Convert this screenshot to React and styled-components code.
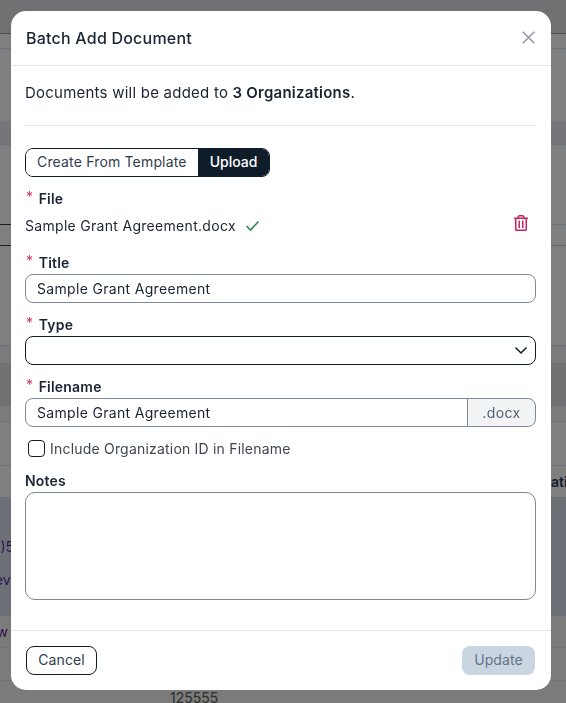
import React from 'react';
import styled, { createGlobalStyle } from 'styled-components';
import { FaRegTrashAlt } from 'react-icons/fa';

const Global = createGlobalStyle`
  html, body { margin: 0; height: 100%; overflow: hidden; background: #7f7f7f; }
  * { box-sizing: border-box; }
  body { font-family: Inter, "Liberation Sans", sans-serif; color: #1a2433; }
`;

/* the table that sits dimmed behind the dialog */
const Backdrop = styled.div`
  display: flex;
  flex-direction: column;
  height: 703px;
  overflow: hidden;
`;

const Row = styled.div`
  position: relative;
  display: flex;
  justify-content: ${p => p.$end ? 'flex-end' : 'flex-start'};
  align-items: center;
  flex: none;
  height: ${p => p.$h}px;
  background: ${p => p.$bg || '#7f7f7f'};
  border-bottom: 1px solid ${p => p.$line || 'transparent'};
  &::before {
    content: '';
    display: ${p => (p.$leftLine ? 'block' : 'none')};
    position: absolute;
    left: 0;
    bottom: -1px;
    width: 11px;
    height: 1px;
    background: ${p => p.$leftLine};
  }
`;

const Peek = styled.span`
  display: flex;
  justify-content: ${p => p.$right ? 'flex-start' : 'flex-end'};
  flex: none;
  width: ${p => p.$w || 14}px;
  overflow: hidden;
  white-space: nowrap;
  font-size: 14px;
  font-weight: ${p => p.$bold ? 600 : 400};
  color: ${p => p.$color || '#2c1250'};
`;

const BottomNumber = styled.span`
  margin-left: 170px;
  margin-top: 12px;
  font-size: 14px;
  line-height: 17px;
  color: #2d2d2d;
`;

const Modal = styled.div`
  position: fixed;
  left: 11px;
  top: 11px;
  width: 540px;
  height: 679px;
  display: flex;
  flex-direction: column;
  background: #fff;
  border-radius: 15px;
  overflow: hidden;
`;

const Header = styled.header`
  display: flex;
  align-items: center;
  justify-content: space-between;
  height: 55px;
  flex: none;
  padding: 0 16px 1px 15px;
  border-bottom: 1px solid #e2e4e8;
`;

const Title = styled.h2`
  margin: 0;
  font-size: 16px;
  line-height: 24px;
  font-weight: 500;
  letter-spacing: 0.22px;
  color: #1a2433;
`;

const CloseBtn = styled.button`
  display: flex;
  padding: 0;
  border: 0;
  background: none;
  color: #8b95a1;
`;

const Body = styled.div`
  flex: 1;
  padding: 0 15px 0 14px;
  display: flex;
  flex-direction: column;
`;

const Lead = styled.p`
  margin: 0;
  padding-top: 16px;
  height: 60px;
  flex: none;
  font-size: 15px;
  line-height: 22px;
  letter-spacing: 0.23px;
  color: #1a2433;
  border-bottom: 1px solid #e2e4e8;
  strong { font-weight: 600; }
`;

const Segment = styled.div`
  display: inline-flex;
  align-self: flex-start;
  flex: none;
  height: 29px;
  margin-top: 22px;
  border: 1px solid #0f1c2a;
  border-radius: 8px;
  overflow: hidden;
`;

const SegmentBtn = styled.button`
  padding: 0 ${p => p.$active ? 12 : 11}px 2px;
  border: 0;
  font: 400 14px Inter, sans-serif;
  letter-spacing: ${p => p.$active ? 0 : 0.17}px;
  background: ${p => p.$active ? '#0f1c2a' : '#fff'};
  color: ${p => p.$active ? '#fff' : '#323d4b'};
  font-weight: ${p => p.$active ? 500 : 400};
`;

const Label = styled.label`
  display: flex;
  align-items: center;
  flex: none;
  height: 20px;
  margin-top: ${p => p.$top || 0}px;
  margin-bottom: ${p => p.$bottom ?? 2}px;
  font-size: 14px;
  font-weight: 600;
  letter-spacing: 0.2px;
  color: #1a2433;
`;

const Star = styled.span`
  width: 12.7px;
  margin-left: 1px;
  font-size: 14px;
  font-weight: 400;
  color: #d6336c;
  position: relative;
  top: -2px;
`;

const FileRow = styled.div`
  display: flex;
  align-items: center;
  flex: none;
  height: 32px;
  padding-right: 7px;
  font-size: 14px;
  letter-spacing: 0.3px;
  color: #1a2433;
`;

const FileCheck = styled.svg`
  width: 15px;
  height: 15px;
  margin-left: 9px;
  color: #2f855a;
`;

const TrashBtn = styled.button`
  display: flex;
  margin-left: auto;
  margin-bottom: 4px;
  padding: 0;
  border: 0;
  background: none;
  color: #c9215d;
  font-size: 16px;
`;

const TextInput = styled.input`
  display: block;
  flex: none;
  width: 100%;
  height: 29px;
  padding: 0 11px;
  border: 1px solid #7c8b9b;
  border-radius: 8px;
  font: 400 14px Inter, sans-serif;
  letter-spacing: 0.32px;
  color: #1a2433;
  background: #fff;
  outline: 0;
`;

const SelectWrap = styled.div`
  position: relative;
  flex: none;
  height: 29px;
`;

const Select = styled.select`
  appearance: none;
  display: block;
  width: 100%;
  height: 29px;
  border: 1px solid #0f1c2a;
  border-radius: 8px;
  background: #fff;
  outline: 0;
`;

const Chevron = styled.svg`
  position: absolute;
  right: 8px;
  top: 9px;
  width: 14px;
  height: 11px;
  color: #0f1c2a;
`;

const Group = styled.div`
  display: flex;
  flex: none;
  height: 29px;
  ${TextInput} {
    flex: 1;
    min-width: 0;
    border-radius: 8px 0 0 8px;
  }
`;

const Addon = styled.span`
  display: flex;
  align-items: center;
  justify-content: center;
  width: 69px;
  flex: none;
  border: 1px solid #7c8b9b;
  border-radius: 0 8px 8px 0;
  margin-left: -1px;
  background: #f1f3f5;
  font-size: 14px;
  letter-spacing: 0.4px;
  color: #55606e;
`;

const CheckRow = styled.label`
  display: flex;
  align-items: center;
  flex: none;
  gap: 5px;
  height: 20px;
  margin-top: 11px;
  padding-left: 3px;
  font-size: 14px;
  letter-spacing: 0.2px;
  color: #3d4754;
`;

const Box = styled.input`
  appearance: none;
  width: 17px;
  height: 17px;
  margin: 0;
  border: 1px solid #0f1c2a;
  border-radius: 4px;
  background: #fff;
`;

const Notes = styled.textarea`
  display: block;
  flex: none;
  width: 100%;
  height: 108px;
  border: 1px solid #7c8b9b;
  border-radius: 10px;
  background: #fff;
  outline: 0;
  resize: none;
`;

const Footer = styled.footer`
  display: flex;
  align-items: flex-start;
  justify-content: space-between;
  height: 60px;
  flex: none;
  padding: 15px 16px 0 15px;
  border-top: 1px solid #e2e6ec;
`;

const CancelBtn = styled.button`
  width: 71px;
  height: 29px;
  padding: 0 0 2px;
  border: 1px solid #0f1c2a;
  border-radius: 8px;
  background: #fff;
  font: 400 14px Inter, sans-serif;
  letter-spacing: 0.1px;
  color: #323d4b;
`;

const UpdateBtn = styled.button`
  width: 73px;
  height: 29px;
  padding: 0 0 2px;
  border: 0;
  border-radius: 8px;
  background: #cbd5e1;
  font: 400 14px Inter, sans-serif;
  letter-spacing: 0.1px;
  color: #64748b;
`;

const backdropRows = [
  { h: 34, bg: '#707173', line: '#48494b' },
  { h: 15, line: '#6b7280' },
  { h: 73, line: '#6e7480' },
  { h: 23, bg: '#74767a', line: '#6b7280' },
  { h: 80, line: '#6b7280', leftLine: '#1c1c1c' },
  { h: 21, line: '#64686e', leftLine: '#1c1c1c' },
  { h: 100, line: '#6b6f76' },
  { h: 17, bg: '#7a7b7c' },
  { h: 43, bg: '#707173' },
  { h: 16, bg: '#7b7b7b', line: '#6e7178' },
  { h: 44, line: '#6e7178' },
  { h: 31, peekRight: 'ati' },
  { h: 33, bg: '#6d7177', line: '#696d73' },
  { h: 34, bg: '#6d7177', peekLeft: ')5' },
  { h: 32, bg: '#6d7177', peekLeft: 'evi' },
  { h: 20, bg: '#6d7177' },
  { h: 32, bg: '#7b7b79', line: '#70737a', peekLeft: 'w', peekWidth: 8 },
  { h: 33, bg: '#7b7b79', line: '#70737a' },
  { h: 22, bg: '#7b7b79', number: '125555' },
];

export default function App() {
  return (
    <>
      <Global />
      <Backdrop>
        {backdropRows.map((r, i) => (
          <Row key={i} $h={r.h} $bg={r.bg} $line={r.line} $leftLine={r.leftLine} $end={!!r.peekRight}>
            {r.peekLeft && <Peek $w={r.peekWidth}>{r.peekLeft}</Peek>}
            {r.number && <BottomNumber>{r.number}</BottomNumber>}
            {r.peekRight && <Peek $right $bold $w={15} $color="#10202f">{r.peekRight}</Peek>}
          </Row>
        ))}
      </Backdrop>
      <Modal role="dialog">
        <Header>
          <Title>Batch Add Document</Title>
          <CloseBtn aria-label="Close">
            <svg width="13" height="13" viewBox="0 0 13 13" fill="none" stroke="currentColor" strokeWidth="1.4">
              <path d="M.7.7l11.6 11.6M12.3.7L.7 12.3" />
            </svg>
          </CloseBtn>
        </Header>
        <Body>
          <Lead>
            Documents will be added to <strong>3 Organizations</strong>.
          </Lead>
          <Segment>
            <SegmentBtn>Create From Template</SegmentBtn>
            <SegmentBtn $active>Upload</SegmentBtn>
          </Segment>
          <Label $top={11} $bottom={1}><Star>*</Star>File</Label>
          <FileRow>
            Sample Grant Agreement.docx
            <FileCheck viewBox="0 0 15 15" fill="none" stroke="currentColor" strokeWidth="1.6">
              <path d="M1.5 8l4 4 8-8.5" />
            </FileCheck>
            <TrashBtn aria-label="Remove"><FaRegTrashAlt /></TrashBtn>
          </FileRow>
          <Label $top={11}><Star>*</Star>Title</Label>
          <TextInput readOnly value="Sample Grant Agreement" />
          <Label $top={11}><Star>*</Star>Type</Label>
          <SelectWrap>
            <Select defaultValue=""><option value=""></option></Select>
            <Chevron viewBox="0 0 14 11" fill="none" stroke="currentColor" strokeWidth="1.5">
              <path d="M1.5 2.5L7 8l5.5-5.5" />
            </Chevron>
          </SelectWrap>
          <Label $top={11}><Star>*</Star>Filename</Label>
          <Group>
            <TextInput readOnly value="Sample Grant Agreement" />
            <Addon>.docx</Addon>
          </Group>
          <CheckRow><Box type="checkbox" />Include Organization ID in Filename</CheckRow>
          <Label $top={12}>Notes</Label>
          <Notes />
        </Body>
        <Footer>
          <CancelBtn>Cancel</CancelBtn>
          <UpdateBtn disabled>Update</UpdateBtn>
        </Footer>
      </Modal>
    </>
  );
}
